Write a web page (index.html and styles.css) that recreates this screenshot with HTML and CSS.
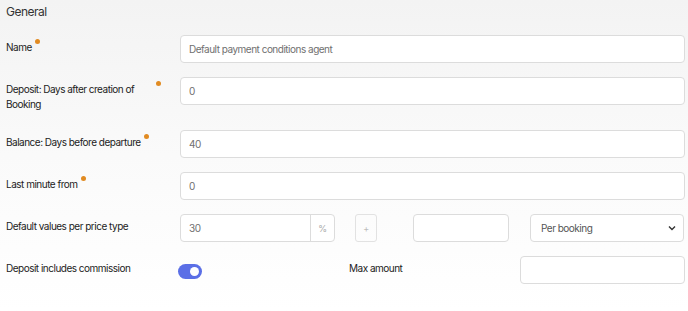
FILE: index.html
```html
<!DOCTYPE html>
<html>
<head>
<meta charset="utf-8">
<link rel="stylesheet" href="styles.css">
</head>
<body>
<div class="page">
  <div class="title">General</div>
  <div class="form">
    <div class="row">
      <div class="label"><span class="text">Name</span><span class="dot"></span></div>
      <input class="field wide" type="text" value="Default payment conditions agent">
    </div>
    <div class="row">
      <div class="label"><span class="text">Deposit: Days after creation of Booking</span><span class="dot"></span></div>
      <input class="field wide" type="text" value="0">
    </div>
    <div class="row">
      <div class="label"><span class="text">Balance: Days before departure</span><span class="dot"></span></div>
      <input class="field wide" type="text" value="40">
    </div>
    <div class="row">
      <div class="label"><span class="text">Last minute from</span><span class="dot"></span></div>
      <input class="field wide" type="text" value="0">
    </div>
    <div class="row">
      <div class="label"><span class="text">Default values per price type</span></div>
      <div class="controls">
        <div class="group">
          <input class="group-input" type="text" value="30">
          <span class="addon">%</span>
        </div>
        <span class="plus">+</span>
        <input class="field amount" type="text" value="">
        <div class="select">
          <span>Per booking</span>
          <svg width="8" height="6" viewBox="0 0 8 6"><path d="M1 1.5 L4 4.5 L7 1.5" fill="none" stroke="#333" stroke-width="1.4"/></svg>
        </div>
      </div>
    </div>
    <div class="row">
      <div class="label"><span class="text">Deposit includes commission</span></div>
      <div class="controls toggle-row">
        <span class="toggle"><span class="knob"></span></span>
        <span class="max-label">Max amount</span>
        <input class="field max" type="text" value="">
      </div>
    </div>
  </div>
</div>
</body>
</html>
```
FILE: styles.css
```css
* { box-sizing: border-box; }
html, body { margin: 0; padding: 0; }
body {
  font-family: Inter, "Noto Sans", sans-serif;
  color: #222;
  background: #fff;
  letter-spacing: -0.5px;
}
.page {
  width: 688px;
  height: 311px;
  padding: 5px 3px 0 6px;
  background: linear-gradient(to bottom, #f3f3f3 0%, #fafafa 50%, #ffffff 100%);
}
.title {
  font-size: 12px;
  line-height: 14px;
  color: #333;
  height: 30px;
}
.form {
  display: flex;
  flex-direction: column;
  gap: 14px;
}
.row {
  display: flex;
  align-items: flex-start;
}
.label {
  width: 174px;
  flex: none;
  display: flex;
  align-items: flex-start;
  padding: 5px 19px 4px 0;
  font-size: 10px;
  line-height: 15px;
  color: #222;
}
.dot {
  flex: none;
  width: 5px;
  height: 5px;
  border-radius: 50%;
  background: #e18b22;
  margin: -1px 0 0 3px;
}
.field {
  height: 28px;
  border: 1px solid #dcdcdc;
  border-radius: 4px;
  background: #fff;
  padding: 0 8px;
  font-family: Inter, "Noto Sans", sans-serif;
  font-size: 10px;
  letter-spacing: -0.5px;
  color: #707070;
  outline: none;
}
.wide { width: 505px; }
.controls {
  display: flex;
  align-items: center;
}
.group {
  display: flex;
  width: 155px;
  height: 28px;
  border: 1px solid #dcdcdc;
  border-radius: 4px;
  background: #fff;
}
.group-input {
  flex: 1;
  min-width: 0;
  border: none;
  background: transparent;
  padding: 0 8px;
  font-family: Inter, "Noto Sans", sans-serif;
  font-size: 10px;
  letter-spacing: -0.5px;
  color: #707070;
  outline: none;
}
.addon {
  width: 24px;
  border-left: 1px solid #dcdcdc;
  display: flex;
  align-items: center;
  justify-content: center;
  font-size: 9px;
  color: #aaa;
}
.plus {
  width: 22px;
  height: 28px;
  margin-left: 20px;
  border: 1px solid #e2e2e2;
  border-radius: 3px;
  display: flex;
  align-items: center;
  justify-content: center;
  font-size: 9px;
  color: #bbb;
}
.amount {
  width: 96px;
  margin-left: 36px;
}
.select {
  width: 154px;
  height: 28px;
  margin-left: 21px;
  border: 1px solid #dcdcdc;
  border-radius: 4px;
  background: #fff;
  display: flex;
  align-items: center;
  justify-content: space-between;
  padding: 0 7px 0 10px;
  font-size: 10px;
  color: #555;
}
.toggle-row {
  align-items: flex-start;
}
.toggle {
  margin: 8px 0 0 -2px;
  width: 24px;
  height: 15px;
  border-radius: 8px;
  background: #5b6fe6;
  position: relative;
  flex: none;
}
.knob {
  position: absolute;
  right: 3px;
  top: 3px;
  width: 9px;
  height: 9px;
  border-radius: 50%;
  background: #fff;
}
.max-label {
  margin: 5px 0 0 147px;
  font-size: 10px;
  line-height: 15px;
  color: #222;
  width: 171px;
}
.max {
  width: 165px;
}
```
